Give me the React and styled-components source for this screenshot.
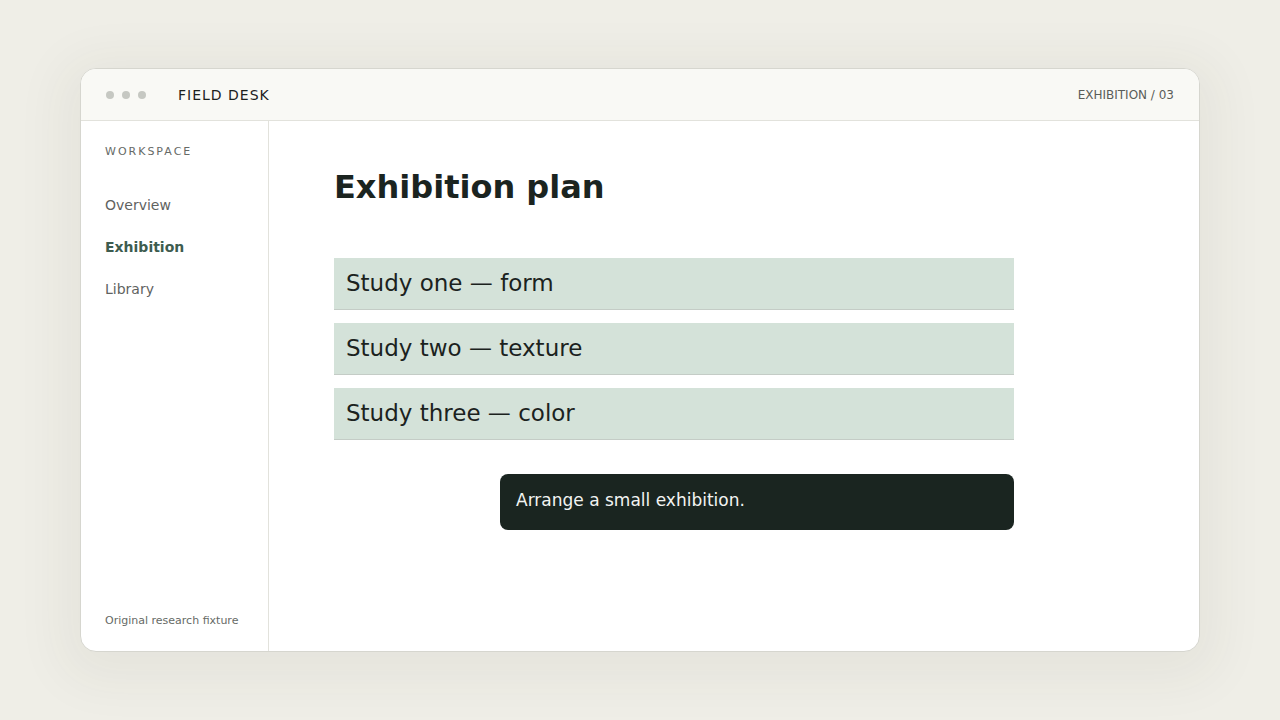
import React from 'react';
import styled, { createGlobalStyle } from 'styled-components';

const GlobalStyle = createGlobalStyle`
  html, body {
    margin: 0;
    padding: 0;
    background: #efeee7;
    font-family: "DejaVu Sans", "Liberation Sans", sans-serif;
  }
  * { box-sizing: border-box; }
`;

const Page = styled.div`
  width: 1280px;
  height: 720px;
  padding: 68px 80px;
  display: flex;
`;

const Window = styled.div`
  flex: 1;
  display: flex;
  flex-direction: column;
  background: #ffffff;
  border: 1px solid #d6d6cf;
  border-radius: 16px;
  overflow: hidden;
  box-shadow: 0 10px 50px 20px rgba(60, 60, 30, 0.05);
`;

const TopBar = styled.header`
  height: 52px;
  flex-shrink: 0;
  display: flex;
  align-items: center;
  padding: 0 25px 0 25px;
  background: #f9f9f5;
  border-bottom: 1px solid #e2e2dc;
`;

const Dots = styled.div`
  display: flex;
  gap: 8px;
  margin-right: 32px;
`;

const Dot = styled.span`
  width: 8px;
  height: 8px;
  border-radius: 50%;
  background: #c6c8c2;
`;

const Brand = styled.div`
  font-size: 14px;
  letter-spacing: 1px;
  color: #1c211e;
`;

const Crumb = styled.div`
  margin-left: auto;
  font-size: 12px;
  color: #5a5d59;
`;

const Body = styled.div`
  flex: 1;
  display: flex;
  min-height: 0;
`;

const Sidebar = styled.aside`
  width: 188px;
  flex-shrink: 0;
  border-right: 1px solid #e2e2dc;
  padding: 24px 24px 24px 24px;
  display: flex;
  flex-direction: column;
`;

const SideLabel = styled.div`
  font-size: 11px;
  letter-spacing: 2px;
  color: #666a66;
  margin-bottom: 38px;
`;

const NavItem = styled.div`
  font-size: 14px;
  line-height: 18px;
  margin-bottom: 24px;
  color: ${p => (p.$active ? '#3d5c4f' : '#5f635f')};
  font-weight: ${p => (p.$active ? 700 : 400)};
`;

const SideFoot = styled.div`
  margin-top: auto;
  font-size: 11px;
  color: #666a66;
`;

const Main = styled.main`
  flex: 1;
  padding: 46px 65px;
  display: flex;
  flex-direction: column;
`;

const Title = styled.h1`
  margin: 0 0 51px 0;
  font-size: 32px;
  line-height: 40px;
  font-weight: 700;
  color: #1b2420;
`;

const List = styled.div`
  width: 680px;
  display: flex;
  flex-direction: column;
  gap: 13px;
`;

const Row = styled.div`
  height: 52px;
  display: flex;
  align-items: center;
  padding: 0 0 2px 12px;
  background: #d4e2d9;
  border-bottom: 1px solid #c4ccc6;
  font-size: 23px;
  color: #1b221e;
`;

const Note = styled.div`
  width: 514px;
  height: 56px;
  margin-top: 34px;
  margin-left: 166px;
  display: flex;
  align-items: center;
  padding: 0 0 5px 16px;
  border-radius: 8px;
  background: #1a2520;
  color: #f2f4f2;
  font-size: 17px;
`;

const studies = ['Study one — form', 'Study two — texture', 'Study three — color'];

export default function App() {
  return (
    <>
      <GlobalStyle />
      <Page>
        <Window>
          <TopBar>
            <Dots>
              <Dot />
              <Dot />
              <Dot />
            </Dots>
            <Brand>FIELD DESK</Brand>
            <Crumb>EXHIBITION / 03</Crumb>
          </TopBar>
          <Body>
            <Sidebar>
              <SideLabel>WORKSPACE</SideLabel>
              <NavItem>Overview</NavItem>
              <NavItem $active>Exhibition</NavItem>
              <NavItem>Library</NavItem>
              <SideFoot>Original research fixture</SideFoot>
            </Sidebar>
            <Main>
              <Title>Exhibition plan</Title>
              <List>
                {studies.map(s => (
                  <Row key={s}>{s}</Row>
                ))}
              </List>
              <Note>Arrange a small exhibition.</Note>
            </Main>
          </Body>
        </Window>
      </Page>
    </>
  );
}
